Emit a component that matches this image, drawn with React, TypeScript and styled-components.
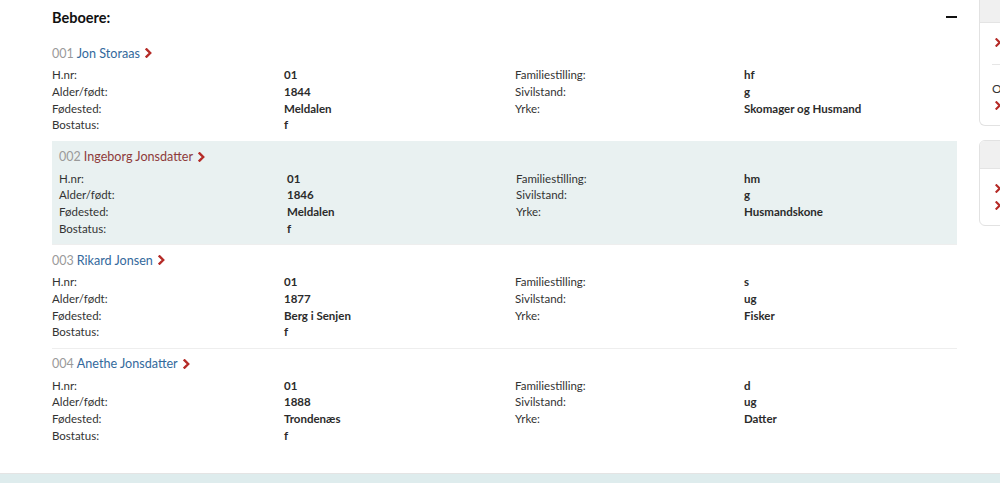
import styled, { createGlobalStyle } from "styled-components";

const GlobalStyle = createGlobalStyle`
  html, body {
    margin: 0;
    padding: 0;
    background: #fff;
    overflow: hidden;
  }
  body {
    font-family: Lato, "Noto Sans", sans-serif;
    color: #333;
  }
`;

const Page = styled.div`
  width: 1000px;
  height: 483px;
  display: flex;
  flex-direction: column;
  overflow: hidden;
`;

const Body = styled.div`
  flex: 1;
  display: flex;
  gap: 22px;
  padding-left: 52px;
`;

const Main = styled.section`
  width: 905px;
  flex-shrink: 0;
  padding-top: 8px;
`;

const Header = styled.header`
  height: 20px;
  display: flex;
  justify-content: space-between;
  align-items: center;
  margin-bottom: 9px;
`;

const Title = styled.h2`
  margin: 0;
  font-size: 14.5px;
  font-weight: 700;
  color: #111;
  line-height: 20px;
`;

const Minus = styled.span`
  width: 11px;
  height: 2.5px;
  background: #111;
  margin-top: -2px;
`;

const Person = styled.div<{ $active?: boolean }>`
  height: 103.5px;
  box-sizing: border-box;
  padding: 7px ${(p) => (p.$active ? "7px" : "0")};
  background: ${(p) => (p.$active ? "#e9f1f1" : "transparent")};
  border-top: 1px solid ${(p) => (p.$active ? "#e9f1f1" : "#eeeeee")};
  &:first-of-type {
    border-top-color: transparent;
  }
`;

const NameLine = styled.div`
  display: flex;
  align-items: center;
  height: 16px;
  margin-bottom: 6px;
  font-size: 12.5px;
`;

const Num = styled.span`
  color: #9a9a9a;
  margin-right: 3px;
`;

const Name = styled.a<{ $active?: boolean }>`
  color: ${(p) => (p.$active ? "#8e3b3b" : "#33699c")};
  text-decoration: none;
  font-size: 12.6px;
  margin-right: 5px;
`;

const Facts = styled.div<{ $active?: boolean }>`
  display: grid;
  grid-template-columns: ${(p) =>
    p.$active ? "228px 229px 228px 1fr" : "232px 231px 229px 1fr"};
  grid-auto-rows: 16.8px;
  font-size: 11.5px;
  line-height: 16.8px;
`;

const Label = styled.span`
  color: #333;
`;

const Value = styled.span`
  color: #2b2b2b;
  font-weight: 700;
`;

const Side = styled.aside`
  width: 200px;
  flex-shrink: 0;
  display: flex;
  flex-direction: column;
  gap: 14px;
`;

const Card = styled.div<{ $clipped?: boolean }>`
  border: 1px solid #e2e2e2;
  border-top-width: ${(p) => (p.$clipped ? 0 : 1)}px;
  border-radius: ${(p) => (p.$clipped ? "0 0 6px 6px" : "6px")};
  overflow: hidden;
  background: #fff;
`;

const CardHead = styled.div<{ $h: number }>`
  height: ${(p) => p.$h}px;
  background: #f0f0f0;
  border-bottom: 1px solid #e4e4e4;
`;

const CardBody = styled.div`
  padding: 0 0 0 12px;
`;

const LinkRow = styled.div`
  height: 17px;
  display: flex;
  align-items: center;
  gap: 6px;
  padding-left: 3px;
  font-size: 12px;
  white-space: nowrap;
  color: #333;
`;

const Divider = styled.hr`
  border: 0;
  border-top: 1px solid #e6e6e6;
  margin: 0;
`;

const SubHead = styled.div`
  font-size: 12px;
  color: #333;
  height: 17px;
  line-height: 17px;
  white-space: nowrap;
`;

const Footer = styled.footer`
  height: 9px;
  background: #deeced;
  border-top: 1px solid #e4e4e4;
`;

function Chevron({ size = 10 }: { size?: number }) {
  return (
    <svg width={size * 0.7} height={size} viewBox="0 0 7 10" fill="none">
      <polyline
        points="1.6,1.4 5.2,5 1.6,8.6"
        stroke="#b52b27"
        strokeWidth="2.4"
        strokeLinecap="square"
      />
    </svg>
  );
}

type Resident = {
  nr: string;
  name: string;
  hnr: string;
  born: string;
  place: string;
  status: string;
  family: string;
  civil: string;
  job: string;
};

const residents: Resident[] = [
  { nr: "001", name: "Jon Storaas", hnr: "01", born: "1844", place: "Meldalen", status: "f", family: "hf", civil: "g", job: "Skomager og Husmand" },
  { nr: "002", name: "Ingeborg Jonsdatter", hnr: "01", born: "1846", place: "Meldalen", status: "f", family: "hm", civil: "g", job: "Husmandskone" },
  { nr: "003", name: "Rikard Jonsen", hnr: "01", born: "1877", place: "Berg i Senjen", status: "f", family: "s", civil: "ug", job: "Fisker" },
  { nr: "004", name: "Anethe Jonsdatter", hnr: "01", born: "1888", place: "Trondenæs", status: "f", family: "d", civil: "ug", job: "Datter" },
];

export default function App() {
  return (
    <Page>
      <GlobalStyle />
      <Body>
        <Main>
          <Header>
            <Title>Beboere:</Title>
            <Minus />
          </Header>
          {residents.map((r, i) => {
            const active = i === 1;
            return (
              <Person key={r.nr} $active={active}>
                <NameLine>
                  <Num>{r.nr}</Num>
                  <Name href="#" $active={active}>{r.name}</Name>
                  <Chevron />
                </NameLine>
                <Facts $active={active}>
                  <Label>H.nr:</Label>
                  <Value>{r.hnr}</Value>
                  <Label>Familiestilling:</Label>
                  <Value>{r.family}</Value>
                  <Label>Alder/født:</Label>
                  <Value>{r.born}</Value>
                  <Label>Sivilstand:</Label>
                  <Value>{r.civil}</Value>
                  <Label>Fødested:</Label>
                  <Value>{r.place}</Value>
                  <Label>Yrke:</Label>
                  <Value>{r.job}</Value>
                  <Label>Bostatus:</Label>
                  <Value>{r.status}</Value>
                </Facts>
              </Person>
            );
          })}
        </Main>
        <Side>
          <Card $clipped>
            <CardHead $h={22} />
            <CardBody>
              <div style={{ height: 11 }} />
              <LinkRow>
                <Chevron size={9} />
                Folketelling 1891
              </LinkRow>
              <div style={{ height: 13 }} />
              <Divider />
              <div style={{ height: 15 }} />
              <SubHead>Om kilden</SubHead>
              <LinkRow>
                <Chevron size={9} />
                Vis kildeinformasjon
              </LinkRow>
              <div style={{ height: 11 }} />
            </CardBody>
          </Card>
          <Card>
            <CardHead $h={27} />
            <CardBody>
              <div style={{ height: 11 }} />
              <LinkRow>
                <Chevron size={9} />
                Bosted
              </LinkRow>
              <LinkRow>
                <Chevron size={9} />
                Kart
              </LinkRow>
              <div style={{ height: 11 }} />
            </CardBody>
          </Card>
        </Side>
      </Body>
      <Footer />
    </Page>
  );
}
